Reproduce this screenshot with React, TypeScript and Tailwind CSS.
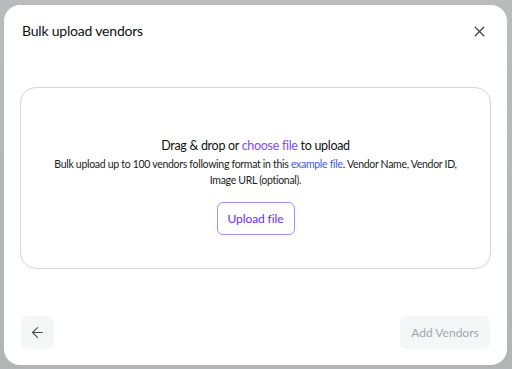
import React from 'react';
import { X, ArrowLeft } from 'lucide-react';

const App: React.FC = () => {
  return (
    <div
      className="w-[512px] h-[369px] bg-gradient-to-b from-[#b9bbbc] to-[#b3b4b5] pt-[5px] pl-[4px]"
      style={{ fontFamily: 'Lato, "Liberation Sans", sans-serif' }}
    >
      <div className="w-[503px] h-[360px] bg-white rounded-[16px] flex flex-col">
        {/* 头部 */}
        <div className="flex items-center justify-between pl-[18px] pr-[19px] pt-[15px]">
          <h2 className="text-[14px] leading-[22px] tracking-[-0.2px] text-[#111]">Bulk upload vendors</h2>
          <button className="text-[#3a3f47]">
            <X className="w-[17px] h-[17px]" strokeWidth={1.8} />
          </button>
        </div>

        {/* 上传区域 */}
        <div className="mx-[16px] mt-[45px] h-[182px] border border-[#d5d5da] rounded-[16px] flex flex-col items-center pt-[49px]">
          <p className="text-[12.5px] leading-[18px] tracking-[-0.3px] text-[#111]">
            Drag &amp; drop or <span className="text-[#7b4dff]">choose file</span> to upload
          </p>
          <p className="mt-[1px] text-[10.5px] leading-[16px] tracking-[-0.3px] text-[#1c1c1c] text-center whitespace-nowrap">
            Bulk upload up to 100 vendors following format in this{' '}
            <span className="text-[#3b5bdb]">example file</span>. Vendor Name, Vendor ID,
            <br />
            Image URL (optional).
          </p>
          <button className="mt-[14px] w-[78px] h-[33px] border border-[#a98bff] rounded-[6px] text-[12px] tracking-[-0.1px] text-[#6a2cf0]">
            Upload file
          </button>
        </div>

        {/* 底部操作 */}
        <div className="mt-auto mb-[16px] flex items-center justify-between px-[17px]">
          <button className="w-[33px] h-[33px] rounded-[6px] bg-[#f5f6f7] flex items-center justify-center text-[#4a4f57]">
            <ArrowLeft className="w-[17px] h-[17px]" strokeWidth={1.5} />
          </button>
          <button className="w-[90px] h-[33px] rounded-[6px] bg-[#f5f6f7] text-[12px] text-[#a3a7ad]">
            Add Vendors
          </button>
        </div>
      </div>
    </div>
  );
};

export default App;
